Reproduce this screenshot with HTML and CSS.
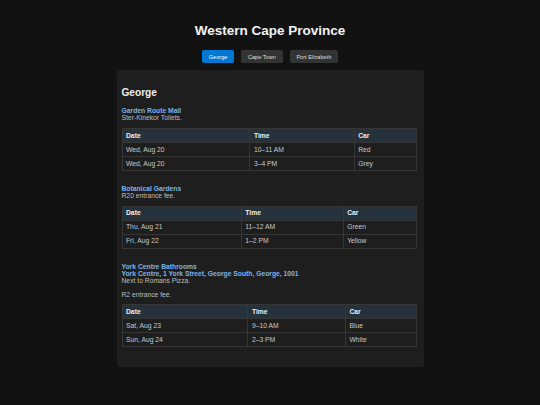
FILE: index.html
```html
<!DOCTYPE html>
<html lang="en">
<head>
<meta charset="utf-8">
<title>Western Cape Province</title>
<link rel="stylesheet" href="styles.css">
</head>
<body>
<header class="top">
  <h1 class="title">Western Cape Province</h1>
  <nav class="tabs">
    <button class="tab active">George</button>
    <button class="tab">Cape Town</button>
    <button class="tab">Port Elizabeth</button>
  </nav>
</header>
<main class="card">
  <h2 class="city">George</h2>

  <section class="place">
    <div class="place-name">Garden Route Mall</div>
    <p class="desc">Ster-Kinekor Toilets.</p>
    <table class="slots">
      <thead><tr><th>Date</th><th>Time</th><th>Car</th></tr></thead>
      <tbody>
        <tr><td>Wed, Aug 20</td><td>10–11 AM</td><td>Red</td></tr>
        <tr><td>Wed, Aug 20</td><td>3–4 PM</td><td>Grey</td></tr>
      </tbody>
    </table>
  </section>

  <section class="place">
    <div class="place-name">Botanical Gardens</div>
    <p class="desc">R20 entrance fee.</p>
    <table class="slots">
      <thead><tr><th>Date</th><th>Time</th><th>Car</th></tr></thead>
      <tbody>
        <tr><td>Thu, Aug 21</td><td>11–12 AM</td><td>Green</td></tr>
        <tr><td>Fri, Aug 22</td><td>1–2 PM</td><td>Yellow</td></tr>
      </tbody>
    </table>
  </section>

  <section class="place">
    <div class="place-name">York Centre Bathrooms</div>
    <div class="place-name">York Centre, 1 York Street, George South, George, 1001</div>
    <p class="desc">Next to Romans Pizza.</p>
    <p class="desc gap">R2 entrance fee.</p>
    <table class="slots">
      <thead><tr><th>Date</th><th>Time</th><th>Car</th></tr></thead>
      <tbody>
        <tr><td>Sat, Aug 23</td><td>9–10 AM</td><td>Blue</td></tr>
        <tr><td>Sun, Aug 24</td><td>2–3 PM</td><td>White</td></tr>
      </tbody>
    </table>
  </section>
</main>
</body>
</html>
```
FILE: styles.css
```css
html, body {
  margin: 0;
  padding: 0;
  background: #121212;
}

body {
  font-family: "Liberation Sans", Arial, sans-serif;
  font-size: 6.75px;
  color: #c4c4c4;
  padding: 22.8px 0 20px;
}

.top {
  display: flex;
  flex-direction: column;
  align-items: center;
}

.title {
  margin: 0;
  font-size: 13.5px;
  line-height: normal;
  font-weight: bold;
  color: #f2f2f2;
}

.tabs {
  display: flex;
  gap: 7px;
  margin-top: 12.7px;
}

.tab {
  font-family: "Liberation Sans", Arial, sans-serif;
  font-size: 5.625px;
  line-height: normal;
  padding: 3.3px 6.75px;
  border: none;
  border-radius: 1.7px;
  background: #333333;
  color: #dcdcdc;
  margin: 0;
}

.tab.active {
  background: #0078d4;
  color: #ffffff;
}

.card {
  display: block;
  width: 307px;
  box-sizing: border-box;
  margin: 7px auto 0;
  background: #1e1e1e;
  border-radius: 3px;
  padding: 5px 6.5px 5.5px 5px;
}

.city {
  margin: 11.5px 0 9.7px;
  font-size: 10.125px;
  line-height: normal;
  font-weight: bold;
  color: #f0f0f0;
}

.place {
  display: flow-root;
  margin: 0 0 7.3px;
}

.place-name {
  font-weight: bold;
  color: #7fb2e6;
  line-height: normal;
}

.desc {
  margin: 0;
  line-height: normal;
  color: #bdbdbd;
}

.desc.gap {
  margin-top: 6.75px;
}

.slots {
  width: 100%;
  border-collapse: collapse;
  margin: 6.75px 0;
}

.slots th,
.slots td {
  border: 1px solid #363636;
  padding: 2.5px 3.5px;
  line-height: 8px;
  text-align: left;
  white-space: nowrap;
}

.slots th {
  background: #25323c;
  color: #eeeeee;
  font-weight: bold;
}

.slots td {
  color: #c8c8c8;
}
```
